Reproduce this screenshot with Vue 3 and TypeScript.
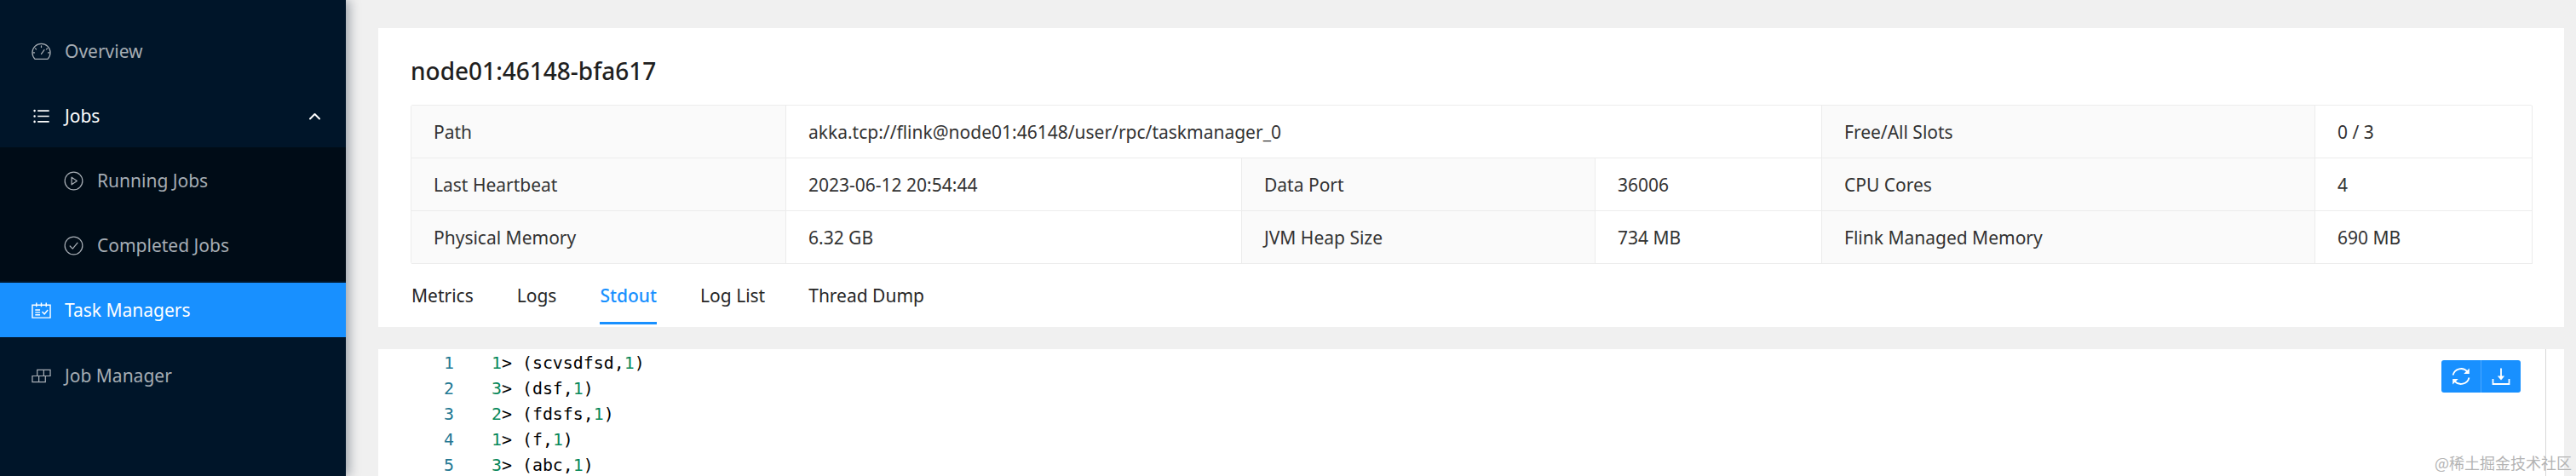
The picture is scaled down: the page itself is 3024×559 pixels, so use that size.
<script setup lang="ts">
interface Cell { text: string; label?: boolean; span?: number }
const cells: Cell[] = [
  { text: 'Path', label: true },
  { text: 'akka.tcp://flink@node01:46148/user/rpc/taskmanager_0', span: 3 },
  { text: 'Free/All Slots', label: true },
  { text: '0 / 3' },
  { text: 'Last Heartbeat', label: true },
  { text: '2023-06-12 20:54:44' },
  { text: 'Data Port', label: true },
  { text: '36006' },
  { text: 'CPU Cores', label: true },
  { text: '4' },
  { text: 'Physical Memory', label: true },
  { text: '6.32 GB' },
  { text: 'JVM Heap Size', label: true },
  { text: '734 MB' },
  { text: 'Flink Managed Memory', label: true },
  { text: '690 MB' },
]
const tabs = ['Metrics', 'Logs', 'Stdout', 'Log List', 'Thread Dump']
const lines = [
  { n: '1', p: '(scvsdfsd,' , t: '1' },
  { n: '3', p: '(dsf,', t: '1' },
  { n: '2', p: '(fdsfs,', t: '1' },
  { n: '1', p: '(f,', t: '1' },
  { n: '3', p: '(abc,', t: '1' },
]
</script>

<template>
  <div class="page">
    <aside class="side">
      <a class="item first">
        <svg class="ic" viewBox="0 0 24 20" fill="none" stroke="currentColor" stroke-width="1.3" stroke-linecap="round">
          <path d="M4.2 19.2A11 11 0 1 1 19.8 19.2Z" />
          <path d="M12 13l3.6-5M12 3.2v1.6M4.6 6.2l1.2 1.1M19.4 6.2l-1.2 1.1M2 11.500h1.600M20.400 11.500H22" />
        </svg>
        <span>Overview</span>
      </a>
      <a class="item open">
        <svg class="ic" viewBox="0 0 1024 1024" fill="currentColor">
          <path d="M912 192H328c-4.400 0-8 3.600-8 8v56c0 4.400 3.600 8 8 8h584c4.400 0 8-3.600 8-8v-56c0-4.400-3.600-8-8-8zm0 284H328c-4.400 0-8 3.600-8 8v56c0 4.400 3.600 8 8 8h584c4.400 0 8-3.600 8-8v-56c0-4.400-3.600-8-8-8zm0 284H328c-4.400 0-8 3.600-8 8v56c0 4.400 3.600 8 8 8h584c4.400 0 8-3.600 8-8v-56c0-4.400-3.600-8-8-8zM104 228a56 56 0 1 0 112 0 56 56 0 1 0-112 0zm0 284a56 56 0 1 0 112 0 56 56 0 1 0-112 0zm0 284a56 56 0 1 0 112 0 56 56 0 1 0-112 0z" />
        </svg>
        <span>Jobs</span>
        <svg class="chev" viewBox="0 0 14 9" fill="none" stroke="currentColor" stroke-width="2" stroke-linecap="round" stroke-linejoin="round">
          <path d="M1.500 7.500L7 2l5.500 5.500" />
        </svg>
      </a>
      <div class="sub">
        <a class="item subitem">
          <svg class="ic" viewBox="0 0 24 24" fill="none" stroke="currentColor" stroke-width="1.300" stroke-linejoin="round">
            <circle cx="12" cy="12" r="10.800" />
            <path d="M9.500 7.500l6.500 4.500-6.500 4.500z" />
          </svg>
          <span>Running Jobs</span>
        </a>
        <a class="item subitem">
          <svg class="ic" viewBox="0 0 24 24" fill="none" stroke="currentColor" stroke-width="1.300" stroke-linecap="round" stroke-linejoin="round">
            <circle cx="12" cy="12" r="10.800" />
            <path d="M7.500 12.500l3.200 3.300 6-7.300" />
          </svg>
          <span>Completed Jobs</span>
        </a>
      </div>
      <a class="item active">
        <svg class="ic" viewBox="0 0 24 20" fill="none" stroke="currentColor" stroke-width="1.500">
          <path d="M1 3.500h22v15.500H1z" />
          <path d="M6 .5v5M12 .5v5M18 .5v5M4.500 9.500h6M4.500 12.500h6M4.500 15.500h6" />
          <path d="M13 11.500l2.800 3 4.200-5" />
        </svg>
        <span>Task Managers</span>
      </a>
      <a class="item last">
        <svg class="ic" viewBox="0 0 24 17" fill="none" stroke="currentColor" stroke-width="1.300">
          <path d="M7 8.500V1h16v7.500H7zM15 1v7.500" />
          <path d="M1 8.500h16V16H1zM9 8.500V16" />
        </svg>
        <span>Job Manager</span>
      </a>
    </aside>

    <main class="main">
      <section class="head">
        <h1 class="title">node01:46148-bfa617</h1>
        <div class="grid">
          <div
            v-for="(c, i) in cells"
            :key="i"
            class="cell"
            :class="{ label: c.label, wide: c.span === 3 }"
          >{{ c.text }}</div>
        </div>
        <nav class="tabs">
          <a v-for="t in tabs" :key="t" class="tab" :class="{ on: t === 'Stdout' }">{{ t }}</a>
        </nav>
      </section>

      <section class="editor">
        <div v-for="(l, i) in lines" :key="i" class="line">
          <span class="ln">{{ i + 1 }}</span>
          <code class="src"><span class="num">{{ l.n }}</span>&gt; {{ l.p }}<span class="num">{{ l.t }}</span>)</code>
        </div>
        <div class="rule"></div>
        <div class="btns">
          <button class="btn" type="button" aria-label="Reload">
            <svg viewBox="0 0 24 24" width="24" height="24" fill="none" stroke="#fff" stroke-width="1.800">
              <path d="M2.500 10.500A9.800 9.800 0 0 1 19.500 6.500M21.500 13.500A9.800 9.800 0 0 1 4.500 17.500" />
              <path d="M21.800 2.500v6.600h-6.600zM2.200 21.500v-6.600h6.600z" fill="#fff" stroke="none" />
            </svg>
          </button>
          <button class="btn" type="button" aria-label="Download">
            <svg viewBox="0 0 24 24" width="24" height="24" fill="none" stroke="#fff" stroke-width="1.800">
              <path d="M12 2.500v11M2.500 15v6h19v-6" />
              <path d="M7.800 11.500h8.400L12 16.500z" fill="#fff" stroke="none" />
            </svg>
          </button>
        </div>
        <div class="mark">@稀土掘金技术社区</div>
      </section>
    </main>
  </div>
</template>

<style>
html, body { margin: 0; background: #f0f0f0; }
</style>

<style scoped>
.page {
  display: flex;
  height: 559px;
  overflow: hidden;
  background: #f0f0f0;
  font-family: "Noto Sans", "Open Sans", sans-serif;
  font-size: 21px;
  color: #262626;
}
.side {
  flex: 0 0 406px;
  height: 559px;
  padding-top: 28px;
  box-sizing: border-box;
  background: #001529;
  box-shadow: 4px 0 12px rgba(0, 21, 41, .35);
  position: relative;
  z-index: 1;
}
.item {
  display: flex;
  align-items: center;
  height: 64px;
  padding-left: 37px;
  color: #a6adb4;
}
.item span { margin-left: 16px; }
.ic { width: 23px; height: 23px; flex: none; }
.open { margin-top: 12px; color: #fff; position: relative; }
.chev { position: absolute; left: 362px; top: 28px; width: 15px; height: 9px; }
.sub {
  margin-top: 5px;
  padding: 7px 0 10px;
  background: #000c17;
}
.subitem { padding-left: 75px; }
.subitem + .subitem { margin-top: 12px; }
.active { margin-top: 2px; background: #1890ff; color: #fff; }
.last { margin-top: 13px; }

.main {
  flex: 1;
  padding: 33px 14px 0 38px;
  min-width: 0;
}
.head {
  height: 351px;
  box-sizing: border-box;
  padding: 0 38px;
  background: #fff;
  position: relative;
}
.title {
  margin: 0;
  padding-top: 30px;
  height: 90px;
  box-sizing: border-box;
  font-size: 28px;
  line-height: 40px;
  font-weight: 500;
  color: #1f1f1f;
}
.grid {
  display: grid;
  grid-template-columns: 440px 535px 415px 266px 579px 255px;
  grid-auto-rows: 62px;
  border: solid #ececec;
  border-width: 1px 0 0 1px;
  border-radius: 3px;
  width: 2490px;
}
.cell {
  display: flex;
  align-items: center;
  padding-left: 26px;
  box-sizing: border-box;
  border: solid #ececec;
  border-width: 0 1px 1px 0;
  min-width: 0;
  white-space: nowrap;
  font-size: 21px;
  color: #333;
}
.label { background: #fafafa; }
.wide { grid-column: span 3; }
.tabs {
  display: flex;
  gap: 51px;
  height: 72px;
  padding-left: 1px;
}
.tab {
  display: flex;
  align-items: center;
  height: 71px;
  box-sizing: border-box;
  border-bottom: 3px solid transparent;
  padding-top: 6px;
  color: #262626;
}
.tab.on { color: #1890ff; font-weight: 500; border-bottom-color: #1890ff; }

.editor {
  margin-top: 26px;
  height: 200px;
  padding-top: 2px;
  box-sizing: border-box;
  background: #fff;
  position: relative;
}
.line {
  display: flex;
  height: 30px;
  line-height: 30px;
  font-family: "DejaVu Sans Mono", "Liberation Mono", monospace;
  font-size: 19.9px;
}
.ln {
  width: 89px;
  text-align: right;
  color: #237893;
}
.src {
  margin-left: 44px;
  font-family: inherit;
  white-space: pre;
  color: #000;
}
.num { color: #09885a; }
.rule {
  position: absolute;
  top: 0;
  bottom: 0;
  left: 2544px;
  width: 1px;
  background: #d8d8d8;
}
.btns {
  position: absolute;
  left: 2422px;
  top: 13px;
  display: flex;
  width: 93px;
  height: 38px;
  border-radius: 3px;
  overflow: hidden;
  background: #1890ff;
}
.btn {
  flex: 1;
  border: 0;
  padding: 0;
  background: transparent;
  display: flex;
  align-items: center;
  justify-content: center;
}
.btn + .btn { border-left: 1px solid #4aa8ff; }
.mark {
  position: absolute;
  left: 2414px;
  top: 120px;
  white-space: nowrap;
  font-family: "Noto Sans CJK SC", sans-serif;
  font-size: 18px;
  line-height: 26px;
  color: #b4b4b4;
}
</style>
